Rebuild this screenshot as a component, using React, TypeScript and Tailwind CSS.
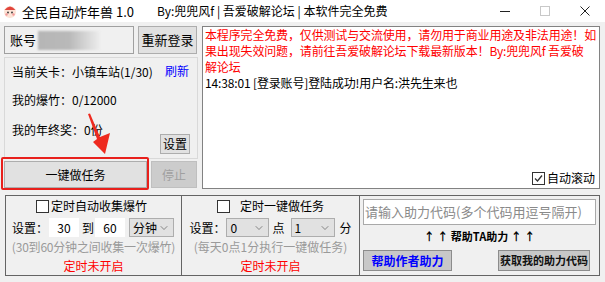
import { ChevronDown } from "lucide-react";

const Check = ({ checked }: { checked?: boolean }) => (
  <span className="inline-flex items-center justify-center w-[13px] h-[13px] border border-[#333333] bg-white shrink-0">
    {checked && (
      <svg width="11" height="11" viewBox="0 0 11 11">
        <path d="M2 5.5 L4.5 8 L9 2.5" fill="none" stroke="#333" strokeWidth="1.3" />
      </svg>
    )}
  </span>
);

const Select = ({ value, className }: { value: string; className: string }) => (
  <div className={`flex items-center justify-between h-[19px] bg-[#e1e1e1] border border-[#adadad] pl-[3px] pr-[3px] ${className}`}>
    <span>{value}</span>
    <ChevronDown size={12} strokeWidth={1.2} color="#444" />
  </div>
);

export default function App() {
  return (
    <div className="w-[605px] h-[282px] bg-[#f0f0f0] font-['Noto_Sans_CJK_SC','Noto_Sans',sans-serif] text-[12px] text-black overflow-hidden">
      {/* title bar */}
      <div className="h-[22px] bg-white flex items-center">
        <svg width="16" height="16" viewBox="0 0 16 16" className="ml-[2px]">
          <circle cx="8" cy="9" r="6" fill="#fde3d6" />
          <path d="M2.5 7 Q8 0 13.5 7 Z" fill="#e2453c" />
          <circle cx="6" cy="9.5" r="0.9" fill="#333" />
          <circle cx="10" cy="9.5" r="0.9" fill="#333" />
          <circle cx="4.5" cy="11.5" r="1.2" fill="#f39a9a" />
          <circle cx="11.5" cy="11.5" r="1.2" fill="#f39a9a" />
        </svg>
        <span className="ml-[4px] w-[135px] text-[13px] leading-none">全民自动炸年兽 1.0</span>
        <span className="text-[12px] leading-none">By:兜兜风f | 吾爱破解论坛 | 本软件完全免费</span>
        <div className="ml-auto flex h-full">
          <div className="w-[40px] flex items-center justify-center">
            <span className="block w-[10px] h-[1px] bg-[#222]" />
          </div>
          <div className="w-[40px] flex items-center justify-center">
            <span className="block w-[10px] h-[10px] border border-[#c8c8c8]" />
          </div>
          <div className="w-[40px] flex items-center justify-center">
            <svg width="10" height="10" viewBox="0 0 10 10">
              <path d="M0.5 0.5 L9.5 9.5 M9.5 0.5 L0.5 9.5" stroke="#222" strokeWidth="1" />
            </svg>
          </div>
        </div>
      </div>

      {/* upper area */}
      <div className="flex pt-[4px] pl-[4px]">
        <div className="w-[194px] flex flex-col relative">
          <div className="flex gap-[4px] h-[28px]">
            <div className="w-[130px] border border-[#a0a0a0] flex items-center pl-[5px]">
              <span className="text-[13px]">账号</span>
              <span className="ml-[2px] block w-[62px] h-[19px] bg-linear-to-r from-[#b6b6b6] via-[#b9b9b9] to-[#ededed] blur-[1px]" />
            </div>
            <button className="w-[59px] h-[28px] bg-[#e1e1e1] border border-[#adadad] text-[13px]">重新登录</button>
          </div>

          <div className="mt-[3px] h-[102px] border border-[#d9d9d9] flex flex-col pl-[7px] pr-[7px] pt-[6px]">
            <div className="flex justify-between h-[16px] items-center">
              <span>当前关卡：小镇车站(1/30)</span>
              <span className="text-[#0000ff] -mt-[3px] mr-[1px]">刷新</span>
            </div>
            <div className="mt-[12px] h-[16px] flex items-center">我的爆竹：0/12000</div>
            <div className="mt-[14px] flex justify-between items-start">
              <span className="h-[16px] flex items-center">我的年终奖：0份</span>
              <button className="mt-[12px] w-[30px] h-[20px] bg-[#e1e1e1] border border-[#adadad] text-[12px] leading-none">设置</button>
            </div>
          </div>

          <div className="mt-[2px] flex gap-[4px] h-[27px]">
            <div className="relative w-[143px]">
              <button className="w-full h-full bg-[#e1e1e1] border border-[#adadad] text-[12px]">一键做任务</button>
              <div className="absolute -left-[3px] -top-[4px] w-[148px] h-[33px] border-2 border-[#e8201c] rounded-[2px]" />
            </div>
            <button className="w-[46px] h-full bg-[#cccccc] border border-[#bfbfbf] text-[#a0a0a0] text-[12px]">停止</button>
          </div>

          {/* red arrow */}
          <svg className="absolute left-[80px] top-[84px]" width="36" height="48" viewBox="0 0 36 48">
            <path d="M4 4 L6 3.5 L16 27 L26 23 L21 44 L9 32 L13 29 Z" fill="#ee2a1f" />
          </svg>
        </div>

        <div className="ml-[4px] w-[398px] h-[163px] bg-white border border-[#828282] flex flex-col pl-[2px]">
          <div className="text-[12px] leading-[16px] tracking-[-0.15px] whitespace-nowrap">
            <div className="text-[#ff0000]">本程序完全免费，仅供测试与交流使用，请勿用于商业用途及非法用途！如</div>
            <div className="text-[#ff0000]">果出现失效问题，请前往吾爱破解论坛下载最新版本！By:兜兜风f 吾爱破</div>
            <div className="text-[#ff0000]">解论坛</div>
            <div>14:38:01 [登录账号]登陆成功!用户名:洪先生来也</div>
          </div>
          <div className="mt-auto self-end flex items-center gap-[2px] pr-[4px] pb-[1px]">
            <Check checked />
            <span className="text-[12px]">自动滚动</span>
          </div>
        </div>
      </div>

      {/* bottom groups */}
      <div className="mt-[6px] ml-[5px] w-[595px] h-[81px] flex border border-[#646464]">
        <div className="w-[175px] flex flex-col items-center pt-[3px]">
          <div className="flex items-center gap-[2px] h-[14px] -ml-[4px]">
            <Check />
            <span>定时自动收集爆竹</span>
          </div>
          <div className="self-start flex items-center mt-[5px] pl-[6px] h-[19px]">
            <span>设置：</span>
            <span className="ml-[1px] w-[30px] h-[19px] bg-white flex items-center justify-center">30</span>
            <span className="ml-[3px]">到</span>
            <span className="ml-[1px] w-[30px] h-[19px] bg-white flex items-center justify-center">60</span>
            <Select value="分钟" className="ml-[4px] w-[45px]" />
          </div>
          <div className="mt-[2px] text-[#9a9a9a] h-[16px] leading-[16px] tracking-[-0.2px]">(30到60分钟之间收集一次爆竹)</div>
          <div className="mt-[3px] text-[#ff0000] h-[16px] leading-[16px]">定时未开启</div>
        </div>

        <div className="w-[178px] border-l border-[#646464] flex flex-col items-center pt-[3px]">
          <div className="flex items-center gap-[10px] h-[14px]">
            <Check />
            <span>定时一键做任务</span>
          </div>
          <div className="flex items-center mt-[5px] h-[19px]">
            <span>设置：</span>
            <Select value="0" className="ml-[1px] w-[43px]" />
            <span className="ml-[3px]">点</span>
            <Select value="1" className="ml-[6px] w-[44px]" />
            <span className="ml-[5px]">分</span>
          </div>
          <div className="mt-[2px] text-[#9a9a9a] h-[16px] leading-[16px]">(每天0点1分执行一键做任务)</div>
          <div className="mt-[3px] text-[#ff0000] h-[16px] leading-[16px]">定时未开启</div>
        </div>

        <div className="flex-1 border-l border-[#646464] flex flex-col px-[3px] pt-[3px]">
          <div className="h-[26px] bg-white border border-[#a9a9a9] flex items-center pl-[1px] text-[13px] text-[#8a8a8a] whitespace-nowrap">
            请输入助力代码(多个代码用逗号隔开)
          </div>
          <div className="mt-[4px] h-[14px] flex justify-center items-center font-bold text-[11px] whitespace-pre">↑ ↑ 帮助TA助力 ↑ ↑</div>
          <div className="mt-[7px] flex justify-between pr-[6px]">
            <button className="w-[89px] h-[21px] bg-[#c8c8c8] border border-[#8c8c8c] text-[#0000ff] font-bold text-[12px] leading-none whitespace-nowrap">帮助作者助力</button>
            <button className="w-[92px] h-[21px] bg-[#c8c8c8] border border-[#8c8c8c] text-[#111] font-bold text-[11px] leading-none whitespace-nowrap px-0">获取我的助力代码</button>
          </div>
        </div>
      </div>
    </div>
  );
}
